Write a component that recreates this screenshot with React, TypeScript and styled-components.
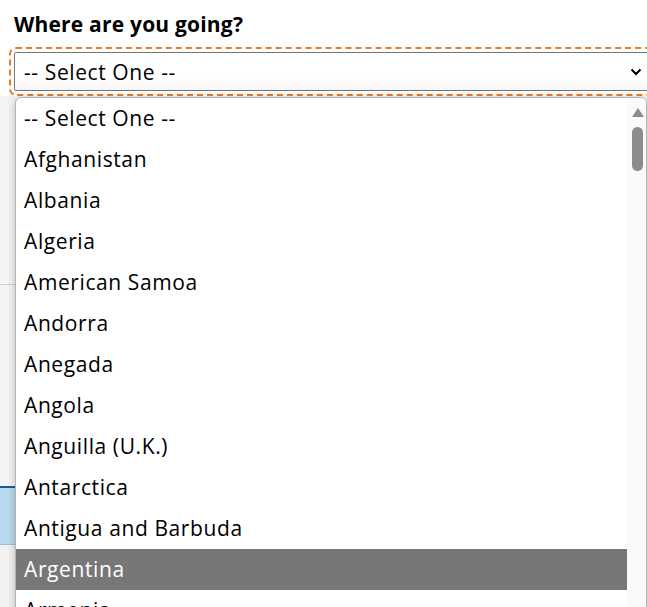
import React from "react";
import styled, { createGlobalStyle } from "styled-components";

const Global = createGlobalStyle`
  html, body { margin: 0; padding: 0; background: #fff; overflow: hidden; }
  body { font-family: "Open Sans", "Noto Sans", sans-serif; color: #000; }
  #root { width: 647px; height: 607px; overflow: hidden; position: relative; }
`;

const Page = styled.div`
  position: relative;
  width: 647px;
  height: 607px;
  overflow: hidden;
  display: flex;
  flex-direction: column;
`;

const Form = styled.div`
  padding: 12px 0 0 14px;
  display: flex;
  flex-direction: column;
`;

const Label = styled.label`
  font-size: 21px;
  font-weight: 700;
  line-height: 24px;
  height: 24px;
  margin-bottom: 16px;
  letter-spacing: 0.2px;
`;

const Field = styled.div`
  width: 650px;
  height: 39px;
  box-sizing: border-box;
  border: 1px solid #767676;
  border-radius: 2px;
  outline: 2px dashed #f07a22;
  outline-offset: 3px;
  background: linear-gradient(#fff 70%, #f6f6f6);
  display: flex;
  align-items: center;
  padding: 0 0 0 9px;
  font-size: 21px;
  letter-spacing: 0.6px;
`;

const Chevron = styled.svg`
  position: absolute;
  left: 630px;
  top: 68px;
`;

const Backdrop = styled.div`
  margin-top: 5px;
  display: flex;
  flex-direction: column;
`;

const Panel = styled.div<{ $h: number; $line?: boolean }>`
  height: ${(p) => p.$h}px;
  background: #f4f4f4;
  border-bottom: ${(p) => (p.$line ? "1px solid #d2d2d2" : "none")};
`;

const Band = styled.div`
  height: 56px;
  background: #b8dcef;
  border-top: 2px solid #1d5c98;
  border-bottom: 1px solid #9fbfd3;
`;

const Rest = styled.div`
  height: 80px;
  background: #f2f2f2;
`;

const ListBox = styled.div`
  position: absolute;
  left: 15px;
  top: 97px;
  width: 632px;
  height: 560px;
  box-sizing: border-box;
  background: #fff;
  border: 1px solid #b4b4b4;
  border-radius: 6px 6px 0 0;
  box-shadow: 0 2px 8px rgba(0, 0, 0, 0.25);
  display: flex;
  overflow: hidden;
`;

const Options = styled.div`
  flex: 1;
  display: flex;
  flex-direction: column;
`;

const Option = styled.div<{ $active?: boolean }>`
  height: 41px;
  flex: none;
  box-sizing: border-box;
  display: flex;
  align-items: center;
  padding: 0 0 1px 8px;
  font-size: 21px;
  letter-spacing: 0.6px;
  background: ${(p) => (p.$active ? "#777777" : "transparent")};
  color: ${(p) => (p.$active ? "#fff" : "#000")};
`;

const Scrollbar = styled.div`
  width: 19px;
  flex: none;
  background: #fafafa;
  display: flex;
  flex-direction: column;
  align-items: center;
  padding-top: 10px;
  box-sizing: border-box;
`;

const Arrow = styled.div`
  width: 0;
  height: 0;
  border-left: 6px solid transparent;
  border-right: 6px solid transparent;
  border-bottom: 9px solid #8c8c8c;
  margin-left: 2px;
`;

const Thumb = styled.div`
  width: 11px;
  height: 44px;
  border-radius: 6px;
  background: #8c8c8c;
  margin-top: 10px;
  margin-left: 2px;
`;

const countries = [
  "-- Select One --",
  "Afghanistan",
  "Albania",
  "Algeria",
  "American Samoa",
  "Andorra",
  "Anegada",
  "Angola",
  "Anguilla (U.K.)",
  "Antarctica",
  "Antigua and Barbuda",
  "Argentina",
  "Armenia",
];

export default function App() {
  return (
    <>
      <Global />
      <Page>
        <Form>
          <Label>Where are you going?</Label>
          <Field>-- Select One --</Field>
        </Form>
        <Backdrop>
          <Panel $h={188} $line />
          <Panel $h={201} />
          <Band />
          <Rest />
        </Backdrop>
        <Chevron width="12" height="8" viewBox="0 0 12 8">
          <path d="M1.5 1.5 L6 6 L10.5 1.5" fill="none" stroke="#000" strokeWidth="2" />
        </Chevron>
        <ListBox>
          <Options>
            {countries.map((c) => (
              <Option key={c} $active={c === "Argentina"}>
                {c}
              </Option>
            ))}
          </Options>
          <Scrollbar>
            <Arrow />
            <Thumb />
          </Scrollbar>
        </ListBox>
      </Page>
    </>
  );
}
